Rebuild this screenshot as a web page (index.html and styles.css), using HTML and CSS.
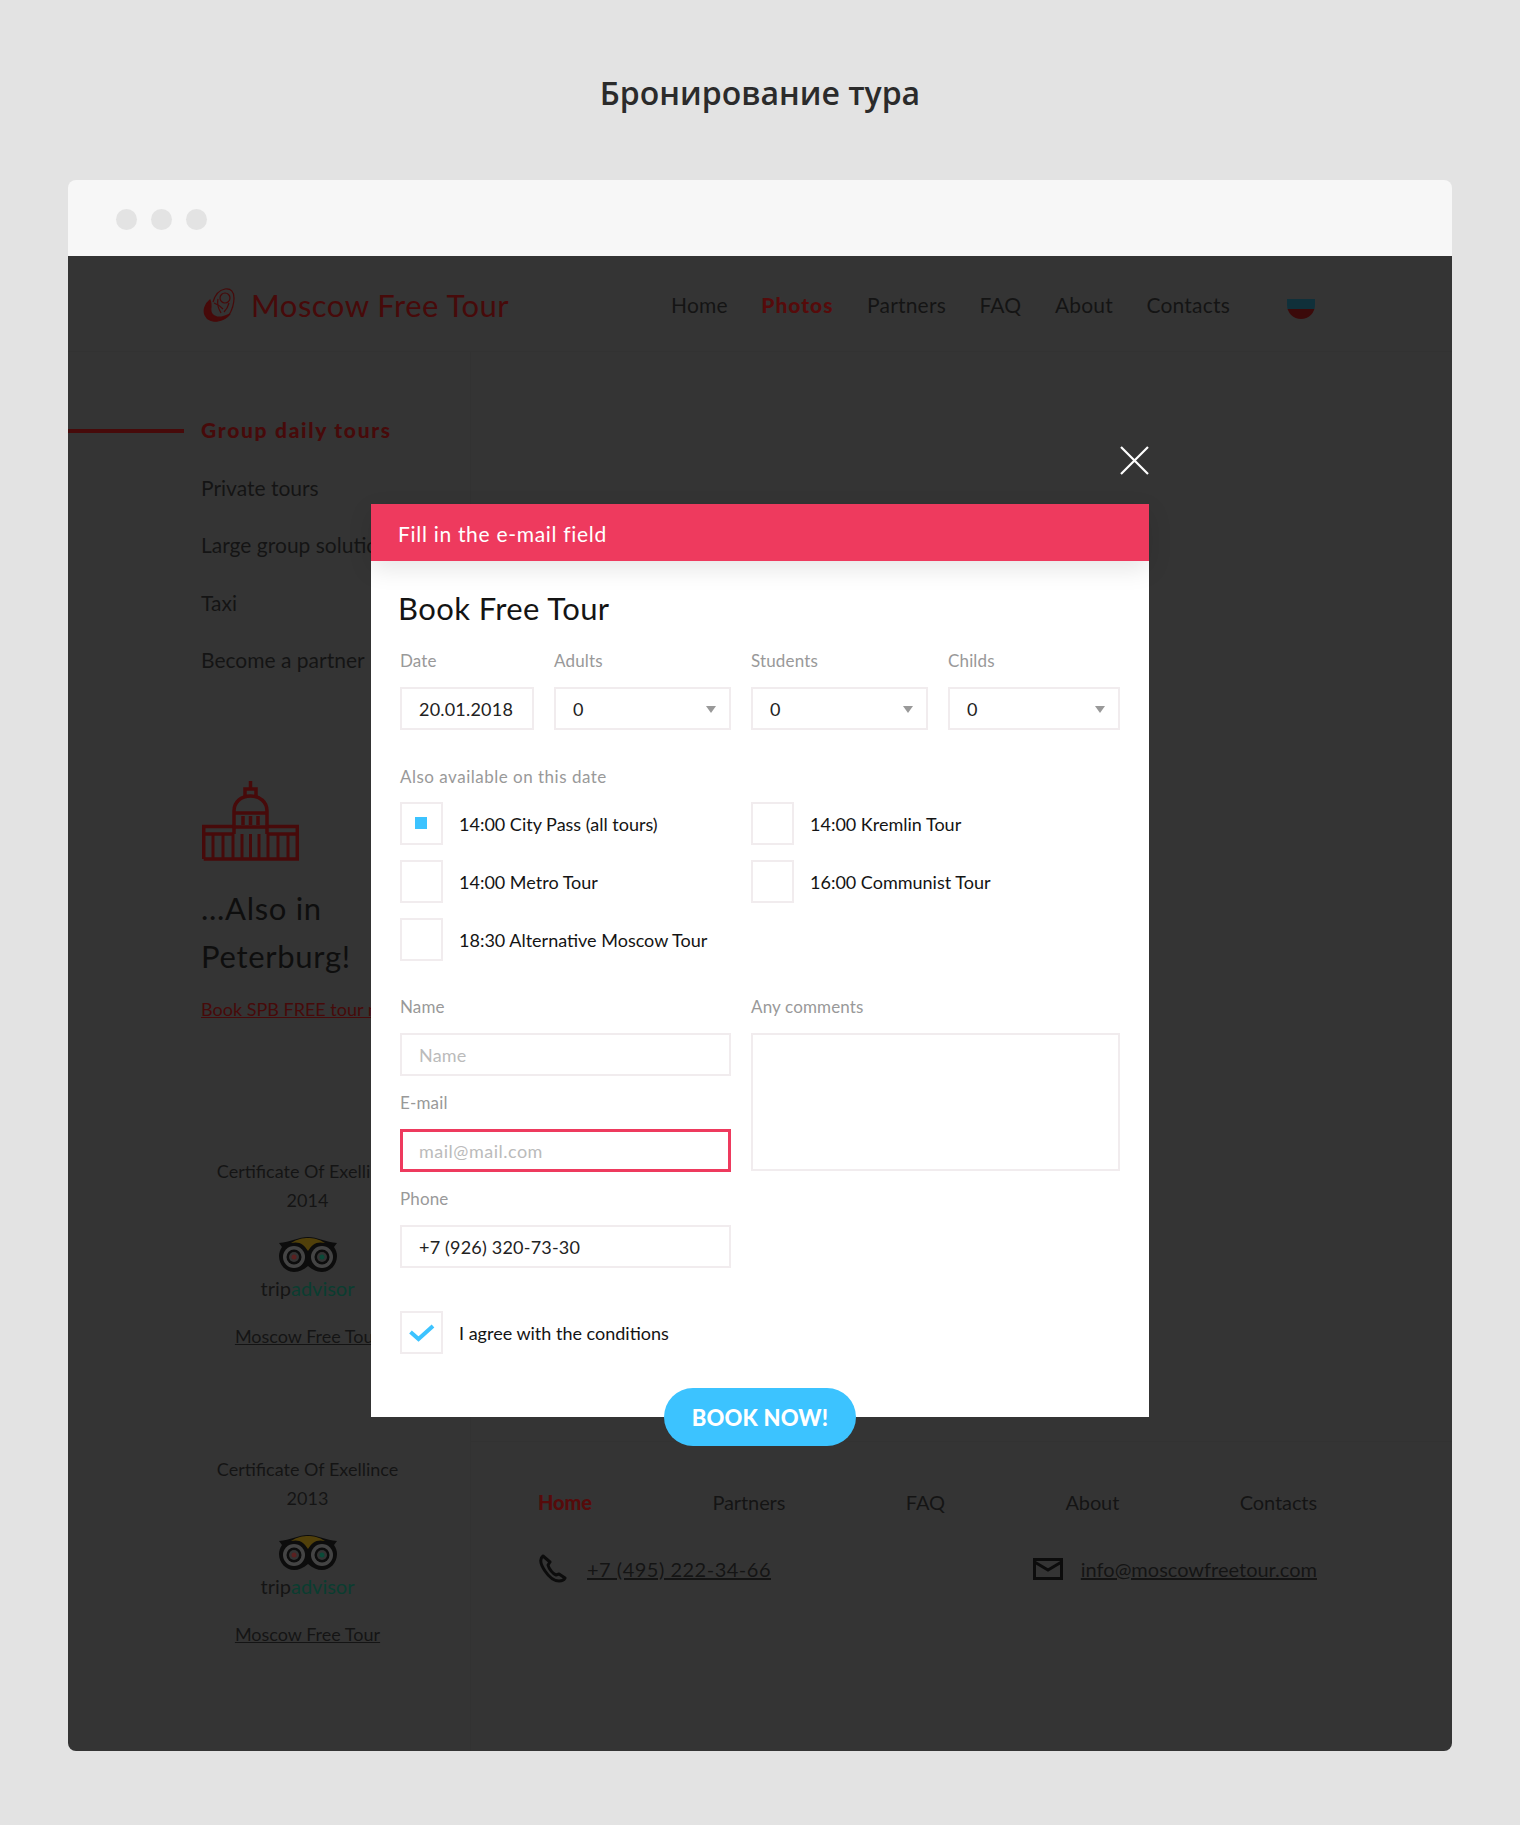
FILE: index.html
```html
<!doctype html>
<html>

<head>
    <title>Бронирование тура</title>
    <link rel="stylesheet" href="styles.css">
</head>

<body>
    <h1 class="pageTitle">Бронирование тура</h1>

    <div class="browser">
        <div class="browserBar">
            <span class="dot"></span>
            <span class="dot"></span>
            <span class="dot"></span>
        </div>

        <div class="site">
            <header class="siteHeader">
                <a class="logo">
                    <svg class="logoIcon" viewBox="0 0 32 34" fill="none" stroke="#470a0a" stroke-width="1.200">
                        <path d="M10 14C12 7 16 2 22 1c6-1 9 3 9 9 0 6-2 12-5 17"/>
                        <path d="M7 12C2 16 0 22 2 27c2 5 8 7 13 6 5-1 9-3 12-7-4 2-8 4-13 3-5-1-7-5-6-10 0-2 0-5-1-7z" fill="#470a0a"/>
                        <circle cx="22" cy="10" r="5"/>
                        <path d="M11 15c3 1 6 3 9 6M15 11c-1 4 0 9 3 14M26 15c-1 4-3 7-5 9" />
                    </svg>
                    <span>Moscow Free Tour</span>
                </a>
                <nav class="topNav">
                    <a>Home</a>
                    <a class="active">Photos</a>
                    <a>Partners</a>
                    <a>FAQ</a>
                    <a>About</a>
                    <a>Contacts</a>
                </nav>
                <span class="flag"></span>
            </header>

            <div class="siteBody">
                <aside class="side">
                    <ul class="sideMenu">
                        <li class="active">Group daily tours</li>
                        <li>Private tours</li>
                        <li>Large group solutions</li>
                        <li>Taxi</li>
                        <li>Become a partner</li>
                    </ul>

                    <div class="spb">
                        <svg class="spbIcon" viewBox="0 0 97 80" fill="none" stroke="#470a0a" stroke-width="3.500">
                            <path d="M1.700 78V45.500H31M66 45.500H95.300V78H1.700M1.700 53H31M66 53H95.300"/>
                            <path d="M11 53V77M21 53V77M31 53V77M40 53V77M48.500 53V77M57 53V77M66 53V77M76 53V77M86 53V77" stroke-width="3"/>
                            <path d="M32 53V30C32 21 39 15 48.500 15S65 21 65 30V53M32 32H65M32 46H65"/>
                            <path d="M43 15V8H54V15M48.500 8V0M41 44V35M48.500 44V35M56 44V35"/>
                        </svg>
                        <h2>...Also in Peterburg!</h2>
                        <a class="spbLink">Book SPB FREE tour now</a>
                    </div>

                    <div class="cert">
                        <p>Certificate Of Exellince</p>
                        <p>2014</p>
                        <svg class="owl" viewBox="0 0 60 36">
                            <path d="M1 6C12 5 21 0 30 0s18 5 29 6l-3 4c2 3 3 6 3 9 0 9-7 16-15 16-5 0-9-2-14-6-5 4-9 6-14 6C8 35 1 28 1 19c0-3 1-6 3-9z" fill="#0c0c0c"/>
                            <path d="M13 6c8-2 13 1 17 8 4-7 9-10 17-8-6-4-12-5-17-5s-11 1-17 5z" fill="#51400a"/>
                            <circle cx="16" cy="20" r="11" fill="#444"/>
                            <circle cx="44" cy="20" r="11" fill="#444"/>
                            <circle cx="16" cy="20" r="7.500" fill="#0c0c0c"/>
                            <circle cx="44" cy="20" r="7.500" fill="#0c0c0c"/>
                            <circle cx="16" cy="20" r="5" fill="#333"/>
                            <circle cx="44" cy="20" r="5" fill="#333"/>
                            <circle cx="16" cy="20" r="2.500" fill="#5a2020"/>
                            <circle cx="44" cy="20" r="2.500" fill="#0a4a38"/>
                        </svg>
                        <div class="tripadvisor">trip<span>advisor</span></div>
                        <a class="certLink">Moscow Free Tour</a>
                    </div>

                    <div class="cert">
                        <p>Certificate Of Exellince</p>
                        <p>2013</p>
                        <svg class="owl" viewBox="0 0 60 36">
                            <path d="M1 6C12 5 21 0 30 0s18 5 29 6l-3 4c2 3 3 6 3 9 0 9-7 16-15 16-5 0-9-2-14-6-5 4-9 6-14 6C8 35 1 28 1 19c0-3 1-6 3-9z" fill="#0c0c0c"/>
                            <path d="M13 6c8-2 13 1 17 8 4-7 9-10 17-8-6-4-12-5-17-5s-11 1-17 5z" fill="#51400a"/>
                            <circle cx="16" cy="20" r="11" fill="#444"/>
                            <circle cx="44" cy="20" r="11" fill="#444"/>
                            <circle cx="16" cy="20" r="7.500" fill="#0c0c0c"/>
                            <circle cx="44" cy="20" r="7.500" fill="#0c0c0c"/>
                            <circle cx="16" cy="20" r="5" fill="#333"/>
                            <circle cx="44" cy="20" r="5" fill="#333"/>
                            <circle cx="16" cy="20" r="2.500" fill="#5a2020"/>
                            <circle cx="44" cy="20" r="2.500" fill="#0a4a38"/>
                        </svg>
                        <div class="tripadvisor">trip<span>advisor</span></div>
                        <a class="certLink">Moscow Free Tour</a>
                    </div>
                </aside>

                <div class="content">
                    <footer class="siteFooter">
                        <nav class="footNav">
                            <a class="active">Home</a>
                            <a>Partners</a>
                            <a>FAQ</a>
                            <a>About</a>
                            <a>Contacts</a>
                        </nav>
                        <div class="contacts">
                            <div class="contact">
                                <svg class="phoneIcon" viewBox="0 0 29 29" fill="none" stroke="#0c0c0c" stroke-width="3" stroke-linejoin="round">
                                    <path d="M5 2C1 5 3 11 7 17c4 6 9 10 14 10 3 0 5-1 6-3l-6-4-3 1c-3-1-7-6-8-10l2-3z"/>
                                </svg>
                                <a>+7 (495) 222-34-66</a>
                            </div>
                            <div class="contact">
                                <svg class="mailIcon" viewBox="0 0 30 22" fill="none" stroke="#0c0c0c" stroke-width="3">
                                    <path d="M1.500 1.500H28.500V20.500H1.500zM1.500 4L15 12 28.500 4"/>
                                </svg>
                                <a>info@moscowfreetour.com</a>
                            </div>
                        </div>
                    </footer>
                </div>
            </div>

            <svg class="closeIcon" viewBox="0 0 29 29" stroke="#fff" stroke-width="2.200">
                <path d="M1 1L28 28M28 1L1 28"/>
            </svg>

            <form class="modal">
                <div class="alertBar">Fill in the e-mail field</div>
                <div class="modalBody">
                    <h3>Book Free Tour</h3>

                    <div class="dateRow">
                        <div class="field">
                            <label>Date</label>
                            <input type="text" value="20.01.2018">
                        </div>
                        <div class="field">
                            <label>Adults</label>
                            <div class="select"><select><option>0</option></select></div>
                        </div>
                        <div class="field">
                            <label>Students</label>
                            <div class="select"><select><option>0</option></select></div>
                        </div>
                        <div class="field">
                            <label>Childs</label>
                            <div class="select"><select><option>0</option></select></div>
                        </div>
                    </div>

                    <div class="fieldLabel">Also available on this date</div>
                    <div class="tourList">
                        <div class="check"><span class="box"><i class="mark"></i></span>14:00 City Pass (all tours)</div>
                        <div class="check"><span class="box"></span>14:00 Kremlin Tour</div>
                        <div class="check"><span class="box"></span>14:00 Metro Tour</div>
                        <div class="check"><span class="box"></span>16:00 Communist Tour</div>
                        <div class="check"><span class="box"></span>18:30 Alternative Moscow Tour</div>
                    </div>

                    <div class="contactRow">
                        <div class="contactFields">
                            <div class="field">
                                <label>Name</label>
                                <input type="text" placeholder="Name">
                            </div>
                            <div class="field">
                                <label>E-mail</label>
                                <input class="invalid" type="text" placeholder="mail@mail.com">
                            </div>
                            <div class="field">
                                <label>Phone</label>
                                <input type="text" value="+7 (926) 320-73-30">
                            </div>
                        </div>
                        <div class="field comments">
                            <label>Any comments</label>
                            <textarea></textarea>
                        </div>
                    </div>

                    <div class="check agree">
                        <span class="box">
                            <svg viewBox="0 0 26 18" fill="none" stroke="#3cc3ff" stroke-width="4">
                                <path d="M1.500 8L9.500 15 24 2"/>
                            </svg>
                        </span>
                        I agree with the conditions
                    </div>
                </div>
                <button class="bookButton" type="button">BOOK NOW!</button>
            </form>
        </div>
    </div>
</body>

</html>
```

FILE: styles.css
```css
* {
    margin: 0;
    padding: 0;
    box-sizing: border-box;
}

body {
    font-family: Lato, "Liberation Sans", sans-serif;
    background-color: #e3e3e3;
    color: #222;
    padding-bottom: 74px;
}

.pageTitle {
    font-family: "Open Sans", "Noto Sans", sans-serif;
    font-size: 32px;
    font-weight: 600;
    line-height: 40px;
    text-align: center;
    padding-top: 73px;
    height: 180px;
    color: #2b2b2b;
}

.browser {
    margin: 0 68px;
    border-radius: 8px;
    overflow: hidden;
}

.browserBar {
    height: 76px;
    background-color: #f7f7f7;
    display: flex;
    align-items: center;
    gap: 14px;
    padding: 2px 0 0 48px;
}

.dot {
    width: 21px;
    height: 21px;
    border-radius: 50%;
    background-color: #e3e3e3;
}

.site {
    position: relative;
    height: 1495px;
    background-color: #343434;
    color: #141414;
    overflow: hidden;
}

.siteHeader {
    height: 96px;
    display: flex;
    align-items: center;
    padding: 2px 0 0 135px;
    border-bottom: 1px solid #323232;
}

.logo {
    display: flex;
    align-items: center;
    width: 468px;
    font-size: 31px;
    letter-spacing: 0.5px;
    color: #470a0a;
}

.logoIcon {
    width: 32px;
    height: 34px;
    margin-right: 16px;
}

.topNav {
    display: flex;
    gap: 33.500px;
    font-size: 21px;
    letter-spacing: 0.2px;
}

.active {
    color: #560b0b;
    font-weight: 900;
}

.topNav .active {
    letter-spacing: 1px;
}

.flag {
    width: 28px;
    height: 20px;
    margin: 9px 0 0 57px;
    border-radius: 0 0 14px 14px;
    background: linear-gradient(#10303a 50%, #3b0a0a 50%);
}

.siteBody {
    display: flex;
    height: 1399px;
}

.side {
    width: 403px;
    flex-shrink: 0;
    border-right: 1px solid #323232;
}

.sideMenu {
    list-style: none;
    padding: 64px 0 0 133px;
    font-size: 21px;
    position: relative;
}

.sideMenu li {
    line-height: 28px;
    margin-bottom: 29.500px;
    white-space: nowrap;
}

.sideMenu .active {
    color: #470a0a;
    letter-spacing: 1.700px;
}

.sideMenu .active::before {
    content: '';
    position: absolute;
    left: 0;
    top: 77px;
    width: 116px;
    height: 4px;
    background-color: #470a0a;
}

.spb {
    padding: 77px 0 0 134px;
    height: 453px;
}

.spbIcon {
    display: block;
    width: 97px;
    height: 80px;
}

.spb h2 {
    font-size: 31px;
    font-weight: 400;
    line-height: 48px;
    letter-spacing: 0.7px;
    margin: 23px 0 0 -1px;
    width: 170px;
    color: #0e0e0e;
}

.spbLink {
    display: block;
    margin: 18px 0 0 -1px;
    font-size: 18px;
    color: #470a0a;
    text-decoration: underline;
    white-space: nowrap;
}

.cert {
    margin-left: 77px;
    height: 298px;
    text-align: center;
    font-size: 18px;
    white-space: nowrap;
}

.cert p {
    line-height: 29px;
}

.owl {
    display: block;
    width: 60px;
    height: 36px;
    margin: 22px auto 0;
}

.tripadvisor {
    font-size: 20px;
    line-height: 26px;
    margin-top: 2px;
}

.tripadvisor span {
    color: #0a3d30;
}

.certLink {
    display: block;
    margin-top: 24px;
    text-decoration: underline;
}

.content {
    flex: 1;
    display: flex;
    flex-direction: column;
}

.siteFooter {
    margin-top: auto;
    height: 310px;
    border-top: 1px solid #323232;
    padding: 48px 135px 0 67px;
    font-size: 20px;
    letter-spacing: -0.1px;
}

.footNav {
    display: flex;
    justify-content: space-between;
}

.contacts {
    display: flex;
    justify-content: space-between;
    margin-top: 40px;
}

.contact {
    display: flex;
    align-items: center;
    gap: 20px;
    letter-spacing: 0.5px;
}

.contact:last-child {
    letter-spacing: 0;
    gap: 18px;
}

.contact a {
    text-decoration: underline;
}

.phoneIcon {
    width: 29px;
    height: 29px;
}

.mailIcon {
    width: 30px;
    height: 22px;
}

.closeIcon {
    position: absolute;
    left: 1052px;
    top: 190px;
    width: 29px;
    height: 29px;
}

.modal {
    position: absolute;
    left: 303px;
    top: 248px;
    width: 778px;
    height: 913px;
    background-color: #fff;
}

.alertBar {
    height: 57px;
    background-color: #ee3a5e;
    color: #fff;
    font-size: 21px;
    letter-spacing: 0.7px;
    line-height: 60px;
    padding-left: 27px;
    box-shadow: 0 8px 24px rgba(0, 0, 0, 0.1);
}

.modalBody {
    padding: 0 29px;
}

.modalBody h3 {
    font-size: 31px;
    font-weight: 400;
    line-height: 40px;
    letter-spacing: 0.4px;
    padding-top: 27px;
    height: 90px;
    margin-left: -2px;
}

.field label,
.fieldLabel {
    display: block;
    font-size: 17px;
    line-height: 20px;
    letter-spacing: 0.15px;
    color: #999;
}

.field input,
.field select,
.field textarea {
    display: block;
    width: 100%;
    height: 43px;
    margin-top: 16px;
    border: 2px solid #f1ecee;
    border-radius: 0;
    outline: 0;
    background: #fff;
    padding-left: 17px;
    font-family: inherit;
    font-size: 18px;
    letter-spacing: 0.2px;
    color: #222;
    resize: none;
    appearance: none;
}

.field input::placeholder {
    color: #bbb;
}

.field input.invalid {
    border: 3px solid #ee3a5e;
    padding-left: 16px;
    letter-spacing: 0.5px;
}

.select {
    position: relative;
}

.select::after {
    content: '';
    position: absolute;
    right: 15px;
    top: 19px;
    border-left: 5px solid transparent;
    border-right: 5px solid transparent;
    border-top: 7px solid #999;
}

.dateRow {
    display: grid;
    grid-template-columns: 134px 177px 177px 172px;
    gap: 20px;
}

.fieldLabel {
    margin-top: 37px;
    letter-spacing: 0.5px;
}

.tourList {
    display: grid;
    grid-template-columns: 331px 369px;
    column-gap: 20px;
    row-gap: 15px;
    margin-top: 15px;
}

.check {
    display: flex;
    align-items: center;
    gap: 16px;
    font-size: 18px;
}

.box {
    width: 43px;
    height: 43px;
    flex-shrink: 0;
    border: 2px solid #f1ecee;
    display: flex;
    align-items: center;
    justify-content: center;
}

.box svg {
    width: 26px;
    height: 18px;
}

.mark {
    width: 12px;
    height: 12px;
    margin: -1px 1px 0 -1px;
    background-color: #3cc3ff;
}

.contactRow {
    display: grid;
    grid-template-columns: 331px 369px;
    column-gap: 20px;
    margin-top: 36px;
}

.contactFields {
    display: flex;
    flex-direction: column;
    gap: 17px;
}

.field.comments textarea {
    height: 138px;
}

.agree {
    margin-top: 43px;
}

.bookButton {
    position: absolute;
    left: 293px;
    top: 884px;
    width: 192px;
    height: 58px;
    border: 0;
    border-radius: 29px;
    background-color: #3cc3ff;
    color: #fff;
    font-family: inherit;
    font-size: 22px;
    font-weight: 900;
    letter-spacing: 0.2px;
}
```
